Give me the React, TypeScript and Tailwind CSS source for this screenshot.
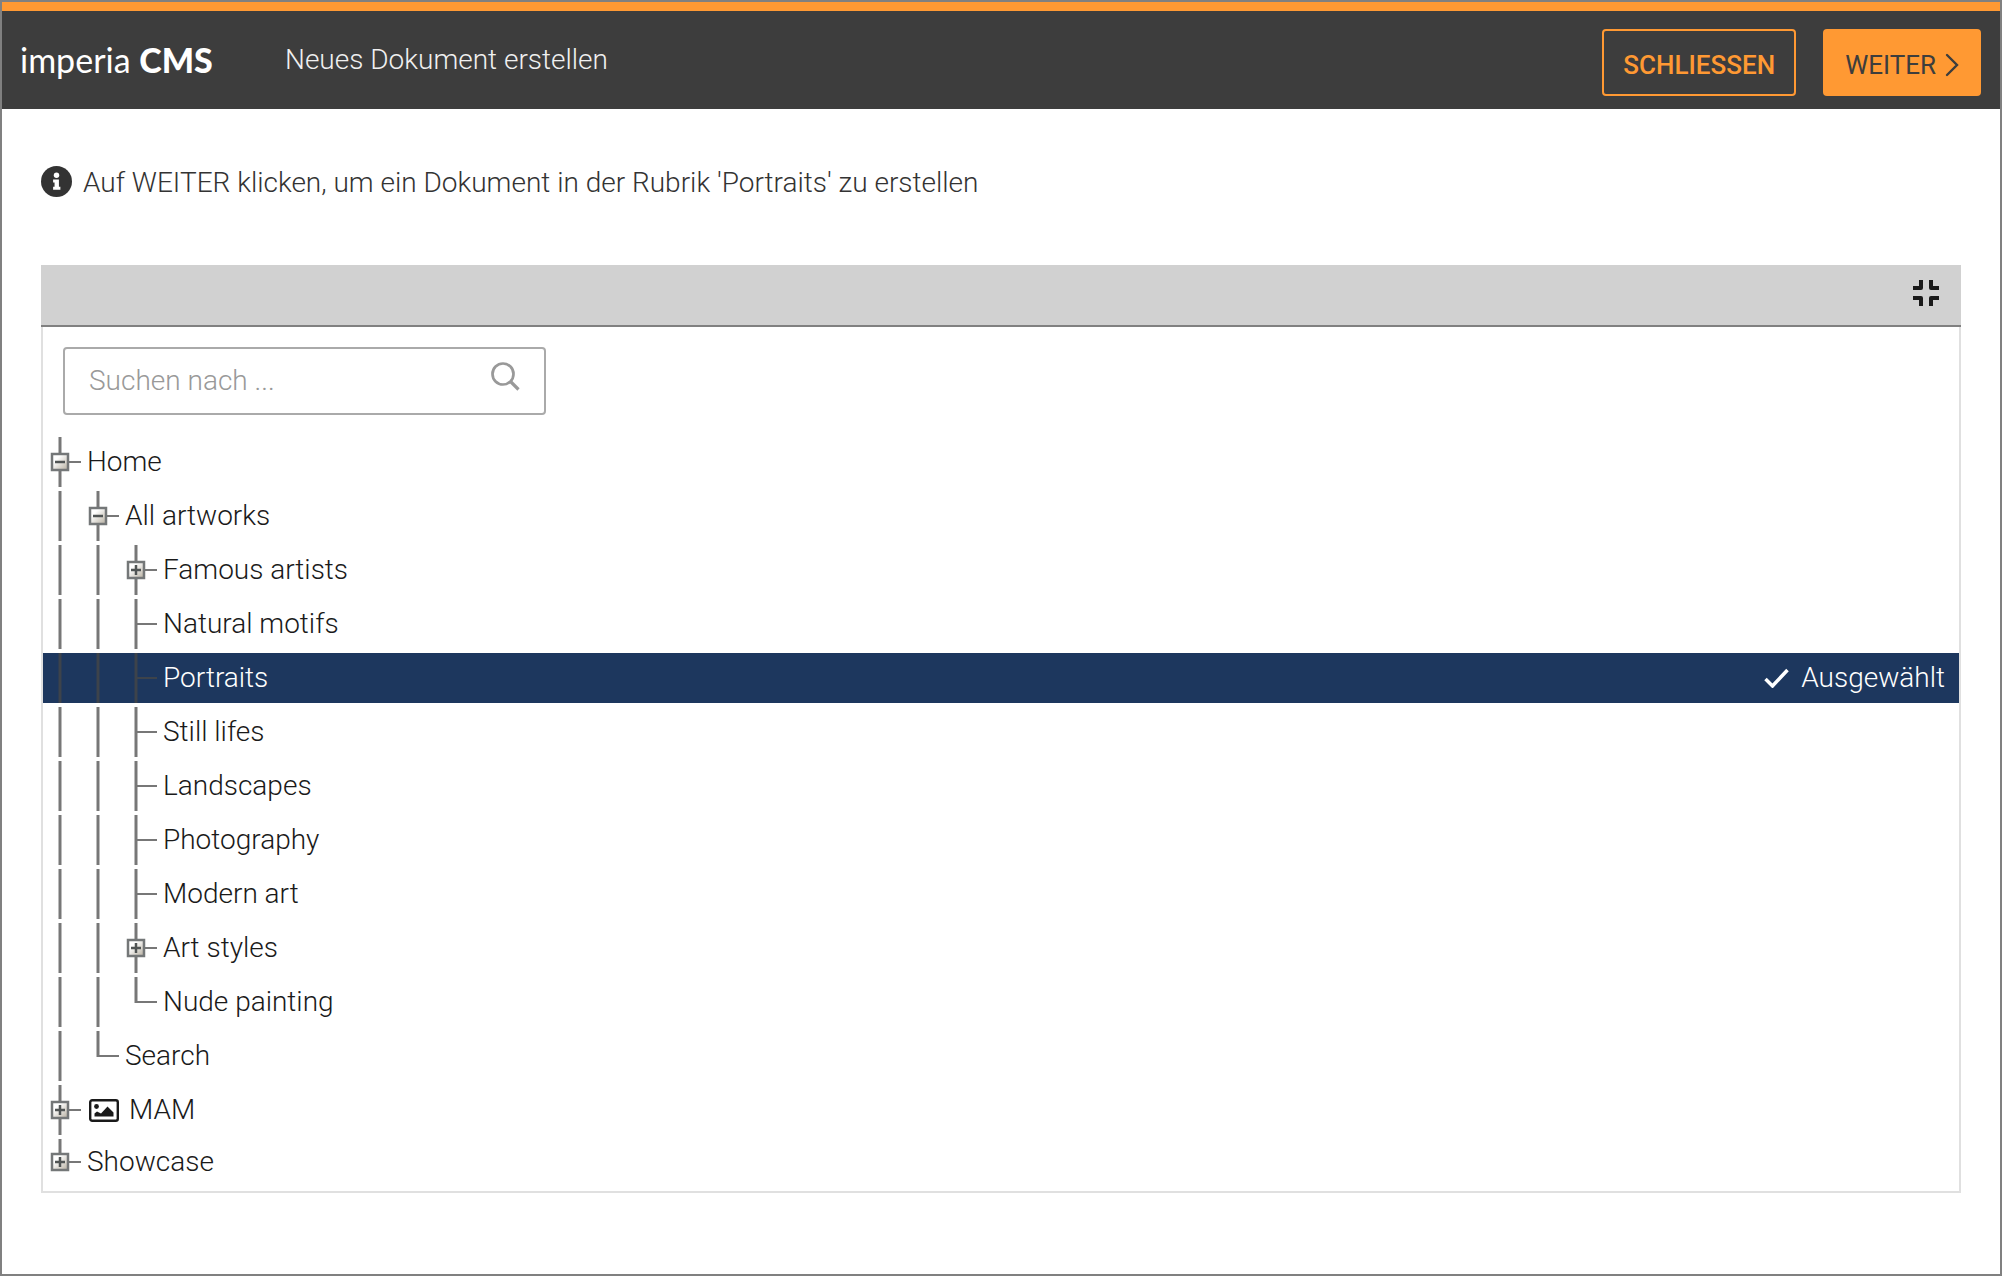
import { useState } from 'react';

type Toggle = 'open' | 'closed' | 'leaf' | 'last';

interface TreeNode {
  label: string;
  depth: number;
  toggle: Toggle;
  icon?: boolean;
}

const nodes: TreeNode[] = [
  { label: 'Home', depth: 0, toggle: 'open' },
  { label: 'All artworks', depth: 1, toggle: 'open' },
  { label: 'Famous artists', depth: 2, toggle: 'closed' },
  { label: 'Natural motifs', depth: 2, toggle: 'leaf' },
  { label: 'Portraits', depth: 2, toggle: 'leaf' },
  { label: 'Still lifes', depth: 2, toggle: 'leaf' },
  { label: 'Landscapes', depth: 2, toggle: 'leaf' },
  { label: 'Photography', depth: 2, toggle: 'leaf' },
  { label: 'Modern art', depth: 2, toggle: 'leaf' },
  { label: 'Art styles', depth: 2, toggle: 'closed' },
  { label: 'Nude painting', depth: 2, toggle: 'last' },
  { label: 'Search', depth: 1, toggle: 'last' },
  { label: 'MAM', depth: 0, toggle: 'closed', icon: true },
  { label: 'Showcase', depth: 0, toggle: 'closed' },
];

function Guide() {
  return (
    <svg className="h-full w-[38px] shrink-0" viewBox="0 0 38 50" preserveAspectRatio="xMinYMin slice" fill="none" aria-hidden="true">
      <path d="M17 0V50" stroke="currentColor" strokeWidth="3" />
    </svg>
  );
}

function Branch({ toggle, end }: { toggle: Toggle; end: boolean }) {
  const mid = end ? 23 : 25;
  return (
    <svg className="w-[38px] shrink-0" height={mid * 2} viewBox={`0 0 38 ${mid * 2}`} fill="none" aria-hidden="true">
      <defs>
        <linearGradient id="box" x1="0" y1="0" x2="1" y2="1">
          <stop offset="0.3" stopColor="#ffffff" />
          <stop offset="1" stopColor="#b5ae9f" />
        </linearGradient>
      </defs>
      <path d={`M17 0V${toggle === 'last' || end ? mid + 1 : 50}`} stroke="currentColor" strokeWidth="3" />
      <path d={`M17 ${mid}H38`} stroke="currentColor" strokeWidth="2" />
      {(toggle === 'open' || toggle === 'closed') && (
        <>
          <rect x="9" y={mid - 8} width="16" height="16" fill="url(#box)" stroke="#747778" strokeWidth="2.5" />
          <path d={`M12 ${mid}H22`} stroke="#505454" strokeWidth="2.5" />
          {toggle === 'closed' && <path d={`M17 ${mid - 5}V${mid + 5}`} stroke="#505454" strokeWidth="2.5" />}
        </>
      )}
    </svg>
  );
}

function ImageIcon() {
  return (
    <svg className="h-[23px] w-[30px]" viewBox="0 0 30 23" fill="none" aria-hidden="true">
      <rect x="1.2" y="1.2" width="27.6" height="20.6" rx="2" stroke="currentColor" strokeWidth="2.4" />
      <circle cx="7.500" cy="7.500" r="2.400" fill="currentColor" />
      <path d="M5.500 17.500v-3l2.500-2 4 2 6.500-7 6 6v4z" fill="currentColor" />
    </svg>
  );
}

export default function App() {
  const [selected, setSelected] = useState('Portraits');

  return (
    <div className="min-h-screen border-2 border-[#808080] bg-white font-['Roboto',sans-serif] text-[28px] leading-8 font-light text-[#1a1a1a]">
      {/* Header */}
      <header className="flex h-[107px] items-center border-t-9 border-[#ff9933] bg-[#3d3d3d] pr-[19px] pl-[18px]">
        <div className="w-[265px] font-['Lato',sans-serif] text-[34px] leading-10 font-normal text-white">
          imperia <span className="font-black">CMS</span>
        </div>
        <h1 className="flex-1 text-[#f0f0f0]">Neues Dokument erstellen</h1>
        <div className="mt-[5px] flex gap-[27px]">
          <button type="button" className="h-[67px] rounded-sm border-2 border-[#ff9933] px-[19px] pt-1 text-[26px] font-medium text-[#ff9933]">
            SCHLIESSEN
          </button>
          <button type="button" className="flex h-[67px] items-center gap-[9px] rounded-sm bg-[#ff9933] px-[22px] pt-1 text-[26px] font-normal text-[#3d3d3d]">
            WEITER
            <svg className="h-6 w-[14px]" viewBox="0 0 14 24" fill="none" aria-hidden="true">
              <path d="M2 2l10 10L2 22" stroke="currentColor" strokeWidth="2.4" strokeLinecap="round" />
            </svg>
          </button>
        </div>
      </header>

      <main className="px-[39px]">
        {/* Hint */}
        <p className="flex items-center gap-[11px] pt-[57px] text-[#333333]">
          <svg className="mb-[3px] h-[31px] w-[31px]" viewBox="0 0 32 32" aria-hidden="true">
            <circle cx="16" cy="16" r="16" fill="#333333" />
            <circle cx="16" cy="9.500" r="2.800" fill="#ffffff" />
            <path d="M12.500 14h6v7.500H20V24.500h-7.500v-3H14V17h-1.500z" fill="#ffffff" />
          </svg>
          Auf WEITER klicken, um ein Dokument in der Rubrik 'Portraits' zu erstellen
        </p>

        {/* Tree panel */}
        <section className="mt-[65px]">
          <div className="flex h-[62px] items-center justify-end border-b-2 border-[#808080] bg-[#d1d1d1] pr-[21px] pb-1">
            <button type="button" aria-label="Minimieren">
              <svg className="h-7 w-7" viewBox="0 0 28 28" fill="none" stroke="#1a1a1a" strokeWidth="4" strokeLinejoin="round" aria-hidden="true">
                <path d="M1 9H9V1M19 1V9H27M1 19H9V27M19 27V19H27" />
              </svg>
            </button>
          </div>
          <div className="border-2 border-t-0 border-[#e0e0e0] pt-5 pb-[6px]">
            <label className="ml-5 flex h-[68px] w-[483px] items-center rounded-sm border-2 border-[#aaaaaa] px-6">
              <input
                type="text"
                aria-label="Suchen nach"
                placeholder="Suchen nach ..."
                className="min-w-0 flex-1 outline-none placeholder:text-[#999999]"
              />
              <svg className="mb-[10px] h-[30px] w-[30px]" viewBox="0 0 30 30" fill="none" stroke="#999999" aria-hidden="true">
                <circle cx="13" cy="13" r="10.500" strokeWidth="2.700" />
                <path d="M20.500 20.500l8 8" strokeWidth="3.200" />
              </svg>
            </label>

            <ul className="mt-[22px] flex flex-col gap-1">
              {nodes.map((node, i) => {
                const active = node.label === selected;
                const end = i === nodes.length - 1;
                return (
                  <li key={node.label}>
                    <button
                      type="button"
                      onClick={() => setSelected(node.label)}
                      className={`flex w-full items-center text-left ${end ? 'h-[46px]' : 'h-[50px]'} ${active ? 'bg-[#1d375e] text-white' : ''}`}
                    >
                      <span className={`flex h-full ${active ? 'text-[#3d434b]' : 'text-[#777777]'}`}>
                        {Array.from({ length: node.depth }, (_, d) => (
                          <Guide key={d} />
                        ))}
                        <Branch toggle={node.toggle} end={end} />
                      </span>
                      <span className={`flex flex-1 items-center gap-[10px] ${node.icon ? 'pl-2' : 'pl-[6px]'}`}>
                        {node.icon && <ImageIcon />}
                        {node.label}
                      </span>
                      {active && (
                        <span className="flex items-center gap-3 pr-[14px]">
                          <svg className="h-5 w-[25px]" viewBox="0 0 25 20" fill="none" aria-hidden="true">
                            <path d="M1.500 11l7 7L23.500 2" stroke="currentColor" strokeWidth="3.500" />
                          </svg>
                          Ausgewählt
                        </span>
                      )}
                    </button>
                  </li>
                );
              })}
            </ul>
          </div>
        </section>
      </main>
    </div>
  );
}
